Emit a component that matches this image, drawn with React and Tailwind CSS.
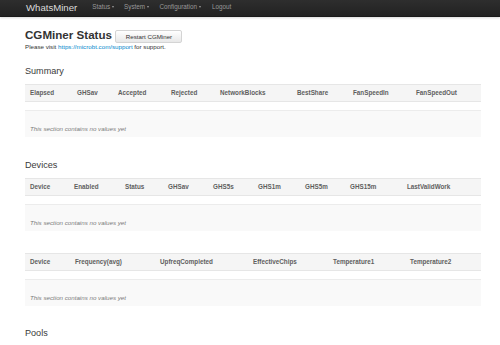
import React from "react";

const font = { fontFamily: '"Liberation Sans", Arial, sans-serif' };

function Caret() {
  return (
    <span className="ml-[2px] inline-block h-0 w-0 border-x-[1.5px] border-t-[2px] border-x-transparent border-t-[#999] align-middle" />
  );
}

function Table({ cols, widths }) {
  return (
    <div>
      <div
        className="grid h-[18px] items-center border-y border-[#e6e6e6] bg-[#f5f5f5] pl-[5px] text-[6.3px] font-bold text-[#5e5e5e]"
        style={{ gridTemplateColumns: widths }}
      >
        {cols.map((c) => (
          <div key={c} className="whitespace-nowrap leading-[8px]">
            {c}
          </div>
        ))}
      </div>
      <div className="mt-[8px] h-[27px] border-t border-[#ececec] bg-[#f9f9f9] pl-[5px] pt-[14px] text-[6.2px] italic leading-[8px] text-[#7a7a7a]">
        This section contains no values yet
      </div>
    </div>
  );
}

export default function App() {
  return (
    <div className="h-[345px] w-[500px] overflow-hidden bg-white text-[#333]" style={font}>
      <div className="flex h-[17px] items-center border-b border-[#1a1a1a] bg-gradient-to-b from-[#2e2e2e] to-[#222] pb-[2px] pl-[26px] shadow-[0_1px_2px_rgba(0,0,0,0.15)]">
        <span className="text-[9.6px] leading-[11px] text-[#dcdcdc]">WhatsMiner</span>
        <div className="ml-[15px] flex items-center text-[6.3px] leading-[8px] text-[#999]">
          <span className="flex items-center">Status<Caret /></span>
          <span className="ml-[10px] flex items-center">System<Caret /></span>
          <span className="ml-[10.5px] flex items-center">Configuration<Caret /></span>
          <span className="ml-[11px]">Logout</span>
        </div>
      </div>

      <div className="pl-[25px] pr-[19px] pt-[10px]">
        <div className="flex h-[16px] items-start">
          <h1 className="text-[11.6px] font-bold leading-[15px] text-[#333]">CGMiner Status</h1>
          <button className="ml-[3.5px] mt-[3px] flex h-[13px] w-[67px] items-center justify-center rounded-[2px] border border-[#d4d4d4] bg-gradient-to-b from-white to-[#e8e8e8] text-[6.2px] leading-[8px] text-[#333]">
            Restart CGMiner
          </button>
        </div>
        <p className="text-[6.2px] leading-[8px] text-[#333]">
          Please visit <span className="text-[#0088cc]">https://microbt.com/support</span> for support.
        </p>

        <h3 className="mt-[14px] text-[9.1px] leading-[12px] text-[#3a3a3a]">Summary</h3>
        <div className="mt-[7px]">
          <Table
            cols={["Elapsed", "GHSav", "Accepted", "Rejected", "NetworkBlocks", "BestShare", "FanSpeedIn", "FanSpeedOut"]}
            widths="47px 41px 53px 49px 77px 56px 63px 1fr"
          />
        </div>

        <h3 className="mt-[22px] text-[9.1px] leading-[12px] text-[#3a3a3a]">Devices</h3>
        <div className="mt-[7px]">
          <Table
            cols={["Device", "Enabled", "Status", "GHSav", "GHS5s", "GHS1m", "GHS5m", "GHS15m", "LastValidWork"]}
            widths="44px 51px 43px 45px 45px 47px 45px 57px 1fr"
          />
        </div>

        <div className="mt-[22px]">
          <Table
            cols={["Device", "Frequency(avg)", "UpfreqCompleted", "EffectiveChips", "Temperature1", "Temperature2"]}
            widths="45px 85px 93px 80px 77px 1fr"
          />
        </div>

        <h3 className="mt-[21px] text-[9.1px] leading-[12px] text-[#3a3a3a]">Pools</h3>
      </div>
    </div>
  );
}
